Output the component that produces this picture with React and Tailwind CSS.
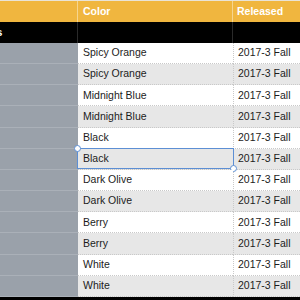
const ROWS = [
  "Spicy Orange",
  "Spicy Orange",
  "Midnight Blue",
  "Midnight Blue",
  "Black",
  "Black",
  "Dark Olive",
  "Dark Olive",
  "Berry",
  "Berry",
  "White",
  "White",
];

const SELECTED = 5;

export default function App() {
  return (
    <div
      className="w-[300px] h-[300px] overflow-hidden bg-white text-[10.5px] text-[#1c1c1c]"
      style={{ fontFamily: '"Liberation Sans", Arial, sans-serif' }}
    >
      <div className="h-px bg-[#e9e3d6]" />
      {/* header */}
      <div className="grid grid-cols-[78px_155px_1fr] h-[21px] bg-[#f0b63f] font-bold text-white">
        <div className="border-r border-[#f6d58f]" />
        <div className="flex items-center pl-[5px] border-r border-[#f6d58f]">Color</div>
        <div className="flex items-center pl-[4px]">Released</div>
      </div>
      {/* group row */}
      <div className="grid grid-cols-[78px_155px_1fr] h-[21px] bg-black font-bold text-white">
        <div className="flex items-center overflow-hidden border-r border-[#2a2a2a]">
          <span className="ml-[-31px] whitespace-nowrap">Colors</span>
        </div>
        <div className="border-r border-[#2a2a2a]" />
        <div />
      </div>
      {/* data rows */}
      <div className="grid grid-rows-[repeat(12,1fr)] h-[254px]">
        {ROWS.map((color, i) => (
          <div key={i} className="grid grid-cols-[78px_155px_1fr] min-h-0">
            <div className="bg-[#9aa1aa] border-b border-[#aab0b8]" />
            <div
              className={`relative flex items-center pl-[5px] border-b border-dotted border-[#c9c9c9] ${
                i % 2 ? "bg-[#e7e7e7]" : "bg-white"
              }`}
            >
              {color}
              {i === SELECTED && (
                <>
                  <div className="absolute left-[-1px] top-[-1px] right-[-1px] bottom-0 border border-[#5d8fd4]" />
                  <div className="absolute left-[-4px] top-[-4px] w-[7px] h-[7px] rounded-full bg-white border border-[#5d8fd4]" />
                  <div className="absolute right-[-4px] bottom-[-3px] w-[7px] h-[7px] rounded-full bg-white border border-[#5d8fd4]" />
                </>
              )}
            </div>
            <div
              className={`flex items-center pl-[4px] border-l border-b border-dotted border-[#c9c9c9] ${
                i % 2 ? "bg-[#e7e7e7]" : "bg-white"
              }`}
            >
              2017-3 Fall
            </div>
          </div>
        ))}
      </div>
      <div className="h-[3px] bg-black" />
    </div>
  );
}
